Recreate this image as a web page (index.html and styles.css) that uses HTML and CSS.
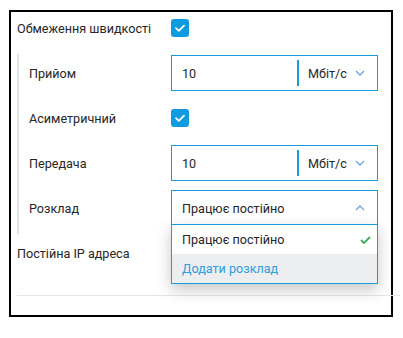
FILE: index.html
```html
<!DOCTYPE html>
<html>
<head>
<meta charset="utf-8">
<link rel="stylesheet" href="styles.css">
</head>
<body>
<div class="frame">
  <div class="form">
    <div class="row top">
      <span class="label">Обмеження швидкості</span>
      <span class="check"><svg viewBox="0 0 18 18" width="18" height="18"><path d="M5 9.2l2.8 2.6L13 6.6" fill="none" stroke="#fff" stroke-width="1.8" stroke-linecap="round" stroke-linejoin="round"/></svg></span>
    </div>
    <div class="group">
      <div class="row">
        <span class="label sub">Прийом</span>
        <div class="field">
          <span class="value">10</span>
          <span class="unit">Мбіт/с<svg class="chev" viewBox="0 0 10 6" width="10" height="6"><path d="M1 1l4 4 4-4" fill="none" stroke="#6ea4dc" stroke-width="1.3"/></svg></span>
        </div>
      </div>
      <div class="row">
        <span class="label sub">Асиметричний</span>
        <span class="check"><svg viewBox="0 0 18 18" width="18" height="18"><path d="M5 9.2l2.8 2.6L13 6.6" fill="none" stroke="#fff" stroke-width="1.8" stroke-linecap="round" stroke-linejoin="round"/></svg></span>
      </div>
      <div class="row">
        <span class="label sub">Передача</span>
        <div class="field">
          <span class="value">10</span>
          <span class="unit">Мбіт/с<svg class="chev" viewBox="0 0 10 6" width="10" height="6"><path d="M1 1l4 4 4-4" fill="none" stroke="#6ea4dc" stroke-width="1.3"/></svg></span>
        </div>
      </div>
      <div class="row">
        <span class="label sub">Розклад</span>
        <div class="select-wrap">
          <div class="select">
            <span class="value">Працює постійно</span>
            <svg class="chev up" viewBox="0 0 10 6" width="10" height="6"><path d="M1 5l4-4 4 4" fill="none" stroke="#6ea4dc" stroke-width="1.3"/></svg>
          </div>
          <div class="menu">
            <div class="opt">Працює постійно<svg class="tick" viewBox="0 0 11 8" width="11" height="8"><path d="M1 4l3 3 6-6" fill="none" stroke="#3fae5f" stroke-width="1.8"/></svg></div>
            <div class="opt add">Додати розклад</div>
          </div>
        </div>
      </div>
    </div>
    <div class="row ip">
      <span class="label">Постійна IP адреса</span>
    </div>
    <div class="divider"></div>
  </div>
</div>
</body>
</html>
```

FILE: styles.css
```css
html, body {
  margin: 0;
  padding: 0;
  background: #fff;
}
body {
  font-family: Roboto, "Liberation Sans", sans-serif;
  font-size: 12.6px;
  color: #262626;
}
.frame {
  margin: 10px 0 0 9px;
  width: 380px;
  height: 303px;
  border: 2px solid #000;
}
.form {
  margin-top: -2px;
  display: flex;
  flex-direction: column;
}
.row {
  height: 36px;
  display: flex;
  align-items: center;
}
.top {
  padding-left: 6px;
}
.label {
  width: 154px;
  flex: none;
}
.label.sub {
  width: 142px;
}
.check {
  width: 18px;
  height: 18px;
  border-radius: 3px;
  background: #0f9be0;
  display: flex;
}
.group {
  margin: 8px 0 0 6px;
  padding: 1px 0 8px 10px;
  border-left: 2px solid #e4e4e4;
  display: flex;
  flex-direction: column;
  gap: 9px;
}
.field, .select {
  width: 207px;
  height: 36px;
  box-sizing: border-box;
  border: 1px solid #1a9bdc;
  display: flex;
  align-items: center;
  background: #fff;
}
.value {
  flex: 1;
  padding-left: 10px;
}
.unit {
  width: 80px;
  height: 26px;
  box-sizing: border-box;
  border-left: 2px solid #1a9bdc;
  display: flex;
  align-items: center;
  justify-content: space-between;
  padding: 0 12px 0 9px;
}
.select-wrap {
  position: relative;
}
.select .chev {
  margin-right: 12px;
}
.menu {
  position: absolute;
  left: 0;
  top: 34px;
  width: 207px;
  box-sizing: border-box;
  border: 1px solid #1a9bdc;
  background: #fff;
  box-shadow: 0 6px 14px rgba(0, 0, 0, 0.22);
  z-index: 2;
}
.opt {
  height: 29px;
  display: flex;
  align-items: center;
  justify-content: space-between;
  padding: 0 6px 0 10px;
}
.opt.add {
  background: #eceef0;
  color: #2c9fdc;
}
.ip {
  margin-top: 1px;
  padding-left: 6px;
}
.divider {
  margin: 24px 0 0 6px;
  width: 383px;
  height: 1px;
  background: #e6e6e6;
}
```
